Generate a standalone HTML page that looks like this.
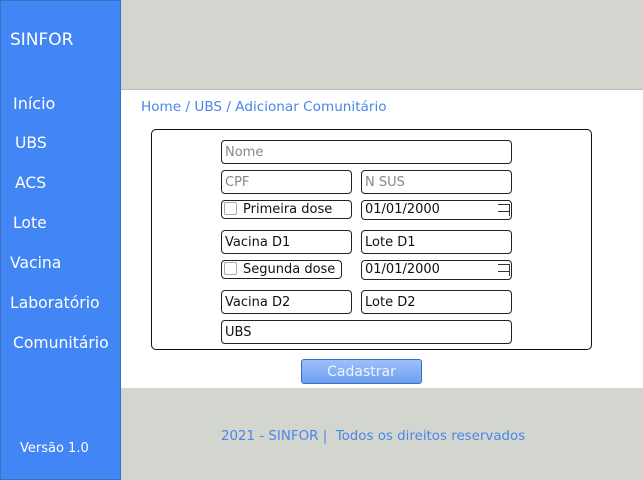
<!DOCTYPE html>
<html><head><style>
*{margin:0;padding:0;box-sizing:border-box}
body{width:643px;height:480px;background:#d3d5cf;font-family:"DejaVu Sans","Liberation Sans",sans-serif;position:relative;overflow:hidden}
.side{position:absolute;left:0;top:0;width:121px;height:480px;background:#4285f4;border:1px solid #3a6fc4}
.side div{position:absolute;color:#fff;font-size:15.6px;white-space:nowrap}
.main{position:absolute;left:121px;top:89px;width:522px;height:299px;background:#fff;border-top:1px solid #bbb}
.a{position:absolute;white-space:nowrap}
.in{position:absolute;border:1px solid #222;border-radius:4px;font-size:13px;color:#111;padding-left:3px;padding-top:1px;line-height:21px;white-space:nowrap;overflow:hidden}
.ph{color:#888}
.cb{display:inline-block;width:13px;height:13px;border:1px solid #aaa;border-radius:2px;vertical-align:-2px;margin-right:6px;background:#fff}
.sp{position:absolute;right:1px;top:3px;width:12px;height:12px;border-top:1px solid #333;border-right:1px solid #333}
.sp:after{content:"";position:absolute;left:0;right:0;top:6px;border-top:1px solid #333}
</style></head><body>
<div class="side">
<div style="left:9px;top:29px;font-size:17px">SINFOR</div>
<div style="left:12px;top:93px;font-size:16px">Início</div>
<div style="left:14px;top:133px">UBS</div>
<div style="left:14px;top:173px">ACS</div>
<div style="left:12px;top:213px">Lote</div>
<div style="left:9px;top:253px">Vacina</div>
<div style="left:9px;top:293px">Laboratório</div>
<div style="left:12px;top:333px">Comunitário</div>
<div style="left:19px;top:440px;font-size:13px">Versão 1.0</div>
</div>
<div class="main"></div>
<div class="a" style="left:141px;top:99px;font-size:13.6px;color:#4a86e8">Home / UBS / Adicionar Comunitário</div>
<div class="a" style="left:151px;top:129px;width:441px;height:221px;border:1px solid #111;border-radius:5px"></div>
<div class="in ph" style="left:221px;top:140px;width:291px;height:24px">Nome</div>
<div class="in ph" style="left:221px;top:170px;width:131px;height:24px">CPF</div>
<div class="in ph" style="left:361px;top:170px;width:151px;height:24px">N SUS</div>
<div class="in" style="left:221px;top:200px;width:131px;height:19px;line-height:17px;padding-top:0;padding-left:2px"><span class="cb"></span>Primeira dose</div>
<div class="in" style="left:361px;top:200px;width:151px;height:20px;line-height:18px;padding-top:0">01/01/2000<span class="sp"></span></div>
<div class="in" style="left:221px;top:230px;width:131px;height:24px">Vacina D1</div>
<div class="in" style="left:361px;top:230px;width:151px;height:24px">Lote D1</div>
<div class="in" style="left:221px;top:260px;width:121px;height:19px;line-height:17px;padding-top:0;padding-left:2px"><span class="cb"></span>Segunda dose</div>
<div class="in" style="left:361px;top:260px;width:151px;height:20px;line-height:18px;padding-top:0">01/01/2000<span class="sp"></span></div>
<div class="in" style="left:221px;top:290px;width:131px;height:24px">Vacina D2</div>
<div class="in" style="left:361px;top:290px;width:151px;height:24px">Lote D2</div>
<div class="in" style="left:221px;top:320px;width:291px;height:24px">UBS</div>
<div class="a" style="left:301px;top:359px;width:121px;height:25px;border:1px solid #3a6fc4;border-radius:3px;background:linear-gradient(#9cc0f8,#6ea0f0);color:#eef4ff;font-size:14px;text-align:center;line-height:24px">Cadastrar</div>
<div class="a" style="left:221px;top:429px;font-size:13.4px;color:#4a86e8">2021 - SINFOR |&nbsp; Todos os direitos reservados</div>
</body></html>
